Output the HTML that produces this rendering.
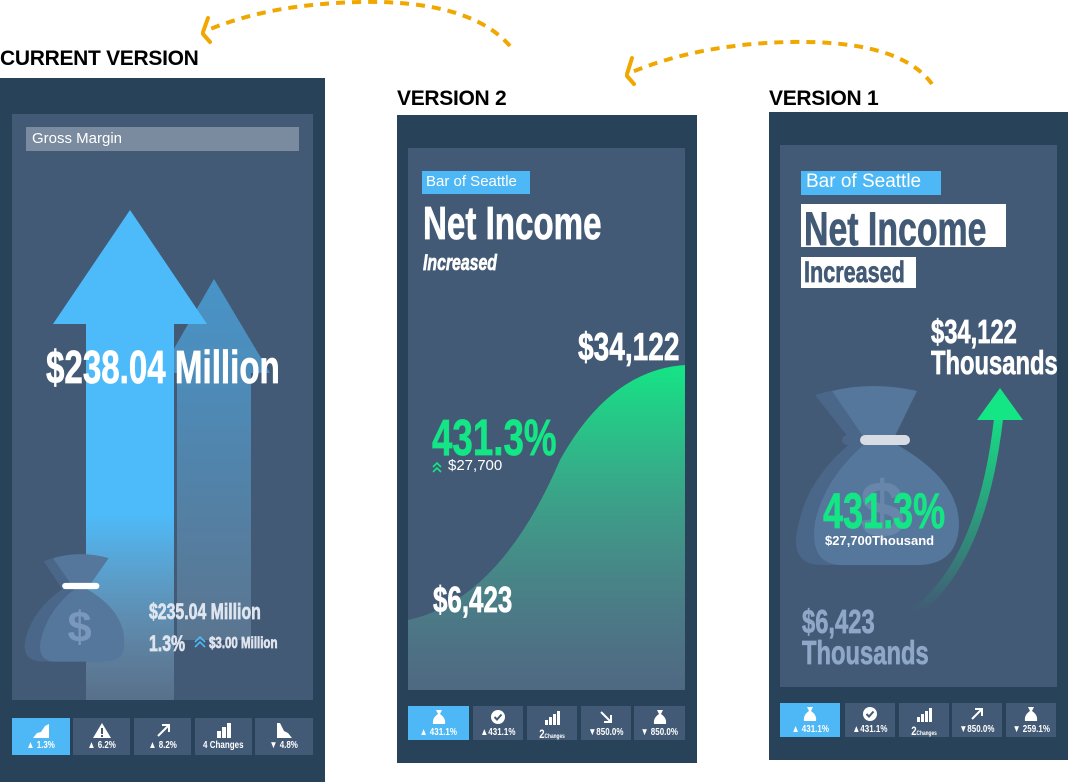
<!DOCTYPE html>
<html><head><meta charset="utf-8"><style>
*{margin:0;padding:0;box-sizing:border-box}
body{width:1069px;height:782px;background:#fff;position:relative;overflow:hidden;font-family:"Liberation Sans",sans-serif}
.a{position:absolute}
.h{font-weight:bold;font-size:21px;color:#000;letter-spacing:-0.3px}
.c{font-family:"Liberation Sans",sans-serif;font-weight:bold;white-space:nowrap;transform:scaleX(.72);transform-origin:0 0;-webkit-text-stroke:0.7px currentColor}
.tab{position:absolute;background:#425a75;color:#fff;text-align:center;font-family:"Liberation Sans",sans-serif;font-weight:bold;font-size:10px;white-space:nowrap}
.tab span.t{display:inline-block;transform:scaleX(.8)}
.tab.on{background:#4db8f5}
.tab svg{display:block;margin:3px auto 1px}
</style></head><body>
<svg class="a" style="left:0;top:0" width="1069" height="782">
<g fill="none" stroke="#f0a800" stroke-width="4" stroke-dasharray="9 7">
<path d="M510 46 Q470 0 360 2 Q270 4 208 30"/>
<path d="M932 84 Q900 40 790 42 Q700 44 632 72"/>
</g>
<g fill="none" stroke="#f0a800" stroke-width="4" stroke-linecap="round">
<path d="M203 32 L208 18 M203 34 L210 42"/>
<path d="M627 74 L632 58 M627 76 L634 84"/>
</g>
<rect x="0" y="78" width="325" height="704" fill="#284259"/>
<rect x="12" y="114" width="301" height="586" fill="#425a75"/>
<rect x="397" y="115" width="300" height="648" fill="#284259"/>
<rect x="408" y="148" width="277" height="542" fill="#425a75"/>
<rect x="769" y="112" width="299" height="648" fill="#284259"/>
<rect x="780" y="145" width="277" height="542" fill="#425a75"/>
<defs>
<linearGradient id="g1" x1="0" y1="0" x2="0" y2="1"><stop offset="0" stop-color="#4dbbfa"/><stop offset="0.62" stop-color="#4dbbfa"/><stop offset="1" stop-color="#8aa4bc" stop-opacity="0.3"/></linearGradient>
<linearGradient id="g2" x1="0" y1="0" x2="0" y2="1"><stop offset="0" stop-color="#4894c8"/><stop offset="1" stop-color="#5a7590"/></linearGradient>
<linearGradient id="g3" x1="0" y1="0" x2="0" y2="1"><stop offset="0" stop-color="#14e585"/><stop offset="1" stop-color="#6a8aa0" stop-opacity="0.3"/></linearGradient>
<linearGradient id="g4" x1="0" y1="0" x2="0" y2="1"><stop offset="0" stop-color="#14e585"/><stop offset="1" stop-color="#14e585" stop-opacity="0"/></linearGradient>
</defs>
<path d="M214 279 L270 373 L251 373 L251 640 L177 640 L177 373 L160 373 Z" fill="url(#g2)"/>
<path d="M130 210 L207 324 L174 324 L174 700 L86 700 L86 324 L53 324 Z" fill="url(#g1)"/>
<g transform="translate(25,555) scale(0.62)">
<path d="M30 10 Q70 -5 110 10 L80 55 Q150 90 155 140 Q158 172 120 172 L30 172 Q-5 172 0 140 Q10 90 60 55 Z" fill="#4a6688"/>
<path d="M45 5 Q90 -8 135 5 L100 55 Q160 90 160 140 Q162 172 130 172 L50 172 Q20 172 25 140 Q35 90 80 55 Z" fill="#55779c"/>
<rect x="60" y="45" width="60" height="10" rx="5" fill="#fff"/>
<text x="88" y="140" font-size="70" font-weight="bold" fill="#7a98bb" text-anchor="middle" font-family="Liberation Sans">$</text>
</g>
<path d="M408 620 Q500 600 560 460 Q610 370 685 365 L685 690 L408 690 Z" fill="url(#g3)"/>
<g transform="translate(797,387)">
<path d="M18 8 Q55 -4 95 8 L70 55 Q135 85 150 135 Q158 178 110 178 L25 178 Q-10 178 2 135 Q12 90 55 55 Z" fill="#4a6688"/>
<path d="M35 4 Q75 -6 120 4 L95 55 Q160 90 162 135 Q162 178 120 178 L45 178 Q12 178 18 135 Q28 90 70 55 Z" fill="#55779c"/>
<rect x="45" y="48" width="68" height="10" rx="5" fill="#4a6688"/>
<rect x="63" y="48" width="50" height="10" rx="5" fill="#d8dde5"/>
<text x="85" y="150" font-size="80" font-weight="bold" fill="#6886aa" text-anchor="middle" font-family="Liberation Sans">$</text>
</g>
<path d="M915 612 Q985 560 1000 405" fill="none" stroke="url(#g4)" stroke-width="9"/>
<path d="M1000 388 L1023 420 L977 420 Z" fill="#14e585"/>
<path d="M195 642 L200 637 L205 642 M195 647 L200 642 L205 647" stroke="#4db8f5" stroke-width="1.6" fill="none"/>
<path d="M433 467 L437 463 L441 467 M433 472 L437 468 L441 472" stroke="#14e585" stroke-width="1.6" fill="none"/>
</svg>

<div class="a h" style="left:0;top:47px">CURRENT VERSION</div>
<div class="a h" style="left:397px;top:87px">VERSION 2</div>
<div class="a h" style="left:769px;top:87px">VERSION 1</div>

<div class="a" style="left:26px;top:127px;width:273px;height:24px;background:#7a8ba0;color:#fff;font-size:15px;padding:3px 6px">Gross Margin</div>
<div class="a c" style="left:46px;top:340px;font-size:46px;color:#fff">$238.04 Million</div>
<div class="a c" style="left:149px;top:599px;font-size:22px;color:#dfe5ee">$235.04 Million</div>
<div class="a c" style="left:149px;top:631px;font-size:22px;color:#dfe5ee">1.3%</div>
<div class="a c" style="left:209px;top:635px;font-size:16px;color:#dfe5ee">$3.00 Million</div>

<div class="a" style="left:422px;top:171px;width:108px;height:23px;background:#4db8f5;color:#fff;font-size:15px;padding:2px 4px">Bar of Seattle</div>
<div class="a c" style="left:423px;top:196px;font-size:46px;color:#fff">Net Income</div>
<div class="a c" style="left:423px;top:250px;font-size:22px;color:#fff;font-style:italic">Increased</div>
<div class="a c" style="left:578px;top:326px;font-size:39px;color:#fff">$34,122</div>
<div class="a c" style="left:432px;top:408px;font-size:51px;color:#14e585">431.3%</div>
<div class="a" style="left:448px;top:457px;font-size:15px;color:#fff">$27,700</div>
<div class="a c" style="left:433px;top:579px;font-size:36px;color:#fff">$6,423</div>

<div class="a" style="left:801px;top:171px;width:140px;height:24px;background:#4db8f5;color:#fff;font-size:19px;padding:0 5px">Bar of Seattle</div>
<div class="a" style="left:801px;top:204px;width:205px;height:43px;background:#fff"></div>
<div class="a c" style="left:804px;top:201px;color:#425a75;font-size:47px">Net Income</div>
<div class="a" style="left:801px;top:257px;width:115px;height:31px;background:#fff"></div>
<div class="a c" style="left:804px;top:256px;color:#425a75;font-size:30px">Increased</div>
<div class="a c" style="left:931px;top:316px;font-size:33px;color:#fff;line-height:31px">$34,122<br>Thousands</div>
<div class="a c" style="left:823px;top:482px;font-size:50px;color:#14e585">431.3%</div>
<div class="a" style="left:825px;top:533px;font-size:13px;color:#fff;font-weight:bold">$27,700Thousand</div>
<div class="a c" style="left:802px;top:606px;font-size:33px;color:#8fa8c8;line-height:31px">$6,423<br>Thousands</div>

<div class="tab on" style="left:12px;top:718px;width:58px;height:37px"><svg width="20" height="18"><path d="M2 17 L6 12 L10 11 L14 5 L18 3 L18 17 Z" fill="#fff"/></svg><span class="t">▲ 1.3%</span></div>
<div class="tab" style="left:73px;top:718px;width:57px;height:37px"><svg width="20" height="18"><path d="M10 2 L19 17 L1 17 Z" fill="#fff"/><rect x="9" y="7" width="2" height="6" fill="#425a75"/><rect x="9" y="14" width="2" height="2" fill="#425a75"/></svg><span class="t">▲ 6.2%</span></div>
<div class="tab" style="left:134px;top:718px;width:57px;height:37px"><svg width="20" height="18"><path d="M5 15 L16 4 M9 4 L16 4 L16 11" stroke="#fff" stroke-width="2" fill="none"/></svg><span class="t">▲ 8.2%</span></div>
<div class="tab" style="left:195px;top:718px;width:57px;height:37px"><svg width="20" height="18"><rect x="3" y="10" width="4" height="7" fill="#fff"/><rect x="8" y="6" width="4" height="11" fill="#fff"/><rect x="13" y="2" width="4" height="15" fill="#fff"/></svg><span class="t">4 Changes</span></div>
<div class="tab" style="left:255px;top:718px;width:58px;height:37px"><svg width="20" height="18"><path d="M3 2 L6 2 L10 10 L14 12 L18 17 L3 17 Z" fill="#fff"/></svg><span class="t">▼ 4.8%</span></div>

<div class="tab on" style="left:408px;top:706px;width:61px;height:34px"><svg width="16" height="17"><path d="M5 1 L11 1 L9 5 Q15 9 14 15 L2 15 Q1 9 7 5 Z" fill="#fff"/></svg><span class="t">▲ 431.1%</span></div>
<div class="tab" style="left:473px;top:706px;width:50px;height:34px"><svg width="16" height="17"><circle cx="8" cy="8" r="7" fill="#fff"/><path d="M4.5 8 L7 10.5 L11.5 5.5" stroke="#425a75" stroke-width="2" fill="none"/></svg><span class="t">▲431.1%</span></div>
<div class="tab" style="left:527px;top:706px;width:50px;height:34px;padding-top:1px"><svg width="18" height="16"><rect x="2" y="10" width="3" height="5" fill="#fff"/><rect x="6" y="7" width="3" height="8" fill="#fff"/><rect x="10" y="4" width="3" height="11" fill="#fff"/><rect x="14" y="1" width="3" height="14" fill="#fff"/></svg><span class="t" style="font-size:12px">2<span style="font-size:6px">Changes</span></span></div>
<div class="tab" style="left:581px;top:706px;width:50px;height:34px"><svg width="16" height="17"><path d="M3 3 L13 13 M6 13 L13 13 L13 6" stroke="#fff" stroke-width="2" fill="none"/></svg><span class="t">▼850.0%</span></div>
<div class="tab" style="left:634px;top:706px;width:51px;height:34px"><svg width="16" height="17"><path d="M5 1 L11 1 L9 5 Q15 9 14 15 L2 15 Q1 9 7 5 Z" fill="#fff"/></svg><span class="t">▼ 850.0%</span></div>

<div class="tab on" style="left:780px;top:703px;width:60px;height:34px"><svg width="16" height="17"><path d="M5 1 L11 1 L9 5 Q15 9 14 15 L2 15 Q1 9 7 5 Z" fill="#fff"/></svg><span class="t">▲ 431.1%</span></div>
<div class="tab" style="left:845px;top:703px;width:50px;height:34px"><svg width="16" height="17"><circle cx="8" cy="8" r="7" fill="#fff"/><path d="M4.5 8 L7 10.5 L11.5 5.5" stroke="#425a75" stroke-width="2" fill="none"/></svg><span class="t">▲431.1%</span></div>
<div class="tab" style="left:899px;top:703px;width:50px;height:34px;padding-top:1px"><svg width="18" height="16"><rect x="2" y="10" width="3" height="5" fill="#fff"/><rect x="6" y="7" width="3" height="8" fill="#fff"/><rect x="10" y="4" width="3" height="11" fill="#fff"/><rect x="14" y="1" width="3" height="14" fill="#fff"/></svg><span class="t" style="font-size:12px">2<span style="font-size:6px">Changes</span></span></div>
<div class="tab" style="left:952px;top:703px;width:50px;height:34px"><svg width="16" height="17"><path d="M3 13 L13 3 M6 3 L13 3 L13 10" stroke="#fff" stroke-width="2" fill="none"/></svg><span class="t">▼850.0%</span></div>
<div class="tab" style="left:1006px;top:703px;width:50px;height:34px"><svg width="16" height="17"><path d="M5 1 L11 1 L9 5 Q15 9 14 15 L2 15 Q1 9 7 5 Z" fill="#fff"/></svg><span class="t">▼ 259.1%</span></div>
</body></html>
